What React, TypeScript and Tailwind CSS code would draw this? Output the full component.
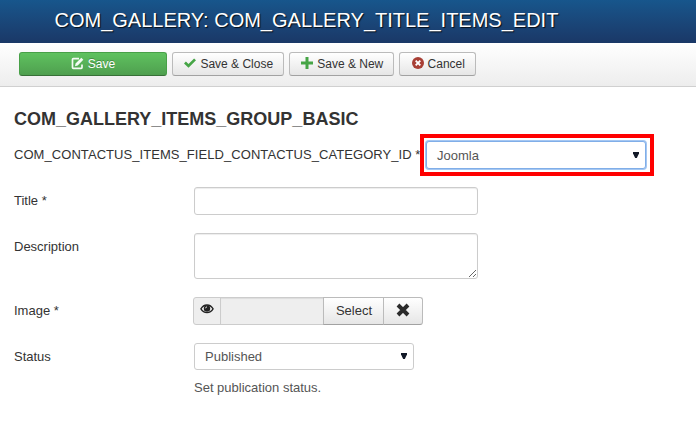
import React from "react";
import clsx from "clsx";

const SaveIcon = () => (
  <svg width="13" height="13" viewBox="0 0 13 13" className="mb-px shrink-0">
    <path d="M8 1.700H2.300a.8.800 0 0 0-.8.800v8a.8.800 0 0 0 .8.800h7.900a.8.800 0 0 0 .8-.8V7.500" fill="none" stroke="#f4fbf4" strokeWidth="1.700" />
    <path d="M4 9.200l.6-2.800L10.300.7l2 2L6.700 8.500z" fill="#f4fbf4" />
  </svg>
);

const CheckIcon = () => (
  <svg width="12" height="11" viewBox="0 0 12 11" className="mb-px shrink-0">
    <path d="M0 5.500L1.900 3.600 4.500 6.100 10.100.500 12 2.300 4.500 9.800z" fill="#46a546" />
  </svg>
);

const PlusIcon = () => (
  <svg width="12" height="12" viewBox="0 0 12 12" className="mb-[2px] shrink-0">
    <path d="M4.500 0h3v4.500H12v3H7.500V12h-3V7.500H0v-3h4.500z" fill="#46a546" />
  </svg>
);

const CancelIcon = () => (
  <svg width="12" height="12" viewBox="0 0 12 12" className="mb-[2px] shrink-0">
    <circle cx="6" cy="6" r="6" fill="#a83f35" />
    <path d="M3.700 3.700l4.600 4.600M8.300 3.700L3.700 8.300" stroke="#fff" strokeWidth="1.900" />
  </svg>
);

const EyeIcon = () => (
  <svg width="14" height="10" viewBox="0 0 14 10" className="shrink-0">
    <path
      d="M.9 4.900C2.400 2.200 4.500 1 7 1s4.600 1.200 6.100 3.900C11.600 7.400 9.500 8.600 7 8.600S2.400 7.400.9 4.900z"
      fill="#eee"
      stroke="#222"
      strokeWidth="1.300"
    />
    <circle cx="7" cy="4.500" r="3.200" fill="#222" />
    <path d="M5.500 4.300A1.500 1.500 0 0 1 7 2.900" fill="none" stroke="#eee" strokeWidth=".9" />
  </svg>
);

const RemoveIcon = () => (
  <svg width="14" height="14" viewBox="0 0 14 14" className="shrink-0">
    <path d="M2 2l10 10M12 2L2 12" stroke="#2b2b2b" strokeWidth="3.900" />
  </svg>
);

const buttons = [
  { title: "Save & Close", icon: CheckIcon, width: "w-[112px]" },
  { title: "Save & New", icon: PlusIcon, width: "w-[105px]" },
  { title: "Cancel", icon: CancelIcon, width: "w-[77px]" },
];

function Select({ value, className }: { value: string; className?: string }) {
  return (
    <div
      className={clsx(
        "relative flex w-[220px] items-center justify-between rounded-[3px] border bg-white pl-[10px] pr-[6px] text-[#555]",
        className
      )}
    >
      <span>{value}</span>
      <svg width="6" height="6" viewBox="0 0 6 6" className="mb-[2px]">
        <path d="M0 0h6v1.500L3.800 6H2.200L0 1.500z" fill="#111827" />
      </svg>
    </div>
  );
}

function Label({ children }: { children: React.ReactNode }) {
  return <div className="w-[180px] shrink-0 pt-[5px] leading-[18px]">{children}</div>;
}

export default function App() {
  return (
    <div className="h-[443px] w-[696px] overflow-hidden bg-white font-['Liberation_Sans',Arial,sans-serif] text-[13px] leading-[18px] text-[#333]">
      <header className="h-[43px] bg-linear-to-b from-[#17568c] to-[#1a3867] pl-[54.5px]">
        <h1 className="text-[20px] leading-[40px] text-white [text-shadow:1px_1px_1px_rgba(0,0,0,0.8)]">
          COM_GALLERY: COM_GALLERY_TITLE_ITEMS_EDIT
        </h1>
      </header>

      <div className="flex h-[44px] gap-[5px] border-b border-[#d0d0d0] bg-linear-to-b from-white to-[#ededed] pl-[19px] pt-[9px] text-[12px]">
        <button className="flex h-[24px] w-[148px] items-center justify-center gap-1 rounded-[3px] border border-[#48a048] border-b-[#387038] bg-linear-to-b from-[#5fc25f] to-[#4f9f4f] text-white [text-shadow:0_-1px_0_rgba(0,0,0,0.25)]">
          <SaveIcon />
          Save
        </button>
        {buttons.map((b) => (
          <button
            key={b.title}
            className={clsx(
              "flex h-[24px] items-center justify-center gap-1 whitespace-nowrap rounded-[3px] border border-[#bbb] border-b-[#a2a2a2] bg-linear-to-b from-white to-[#e6e6e6] pl-[1.5px]",
              b.width
            )}
          >
            <b.icon />
            {b.title}
          </button>
        ))}
      </div>

      <main className="pl-[14px] pt-[20px]">
        <h2 className="text-[18px] font-bold leading-[24px]">COM_GALLERY_ITEMS_GROUP_BASIC</h2>

        <div className="mt-[10px] flex h-[28px]">
          <div className="w-[412px] shrink-0 whitespace-nowrap pt-[5px] tracking-[0.06px]">
            COM_CONTACTUS_ITEMS_FIELD_CONTACTUS_CATEGORY_ID *
          </div>
          <div className="relative">
            <Select
              value="Joomla"
              className="h-[28px] border-[#80aee8] pt-[2px] shadow-[0_0_0_1px_#a5c7f2]"
            />
            <div className="absolute -left-[6px] -top-[7px] h-[42px] w-[234px] border-4 border-[#f00]" />
          </div>
        </div>

        <div className="mt-[18px] flex">
          <Label>Title *</Label>
          <input className="h-[28px] w-[284px] rounded-[3px] border border-[#ccc] shadow-[inset_0_1px_1px_rgba(0,0,0,0.075)]" />
        </div>

        <div className="mt-[18px] flex">
          <Label>Description</Label>
          <textarea className="h-[46px] w-[284px] rounded-[3px] border border-[#ccc] shadow-[inset_0_1px_1px_rgba(0,0,0,0.075)]" />
        </div>

        <div className="mt-[18px] flex">
          <Label>Image *</Label>
          <div className="-ml-px flex h-[28px]">
            <div className="flex w-[28px] justify-center rounded-l-[3px] border border-[#ccc] bg-[#eee] pt-[6px]">
              <EyeIcon />
            </div>
            <div className="-ml-px w-[104px] border border-[#ccc] bg-[#eee] shadow-[inset_0_1px_1px_rgba(0,0,0,0.075)]" />
            <button className="-ml-px w-[61px] border border-[#bbb] border-b-[#a2a2a2] bg-linear-to-b from-white to-[#e6e6e6] pl-px">
              Select
            </button>
            <button className="-ml-px flex w-[40px] justify-center rounded-r-[3px] border border-[#bbb] border-b-[#a2a2a2] bg-linear-to-b from-white to-[#e6e6e6] pt-[5px]">
              <RemoveIcon />
            </button>
          </div>
        </div>

        <div className="mt-[18px] flex">
          <Label>Status</Label>
          <div>
            <Select value="Published" className="h-[27px] border-[#ccc]" />
            <p className="mt-[9px] text-[#555]">Set publication status.</p>
          </div>
        </div>
      </main>
    </div>
  );
}
